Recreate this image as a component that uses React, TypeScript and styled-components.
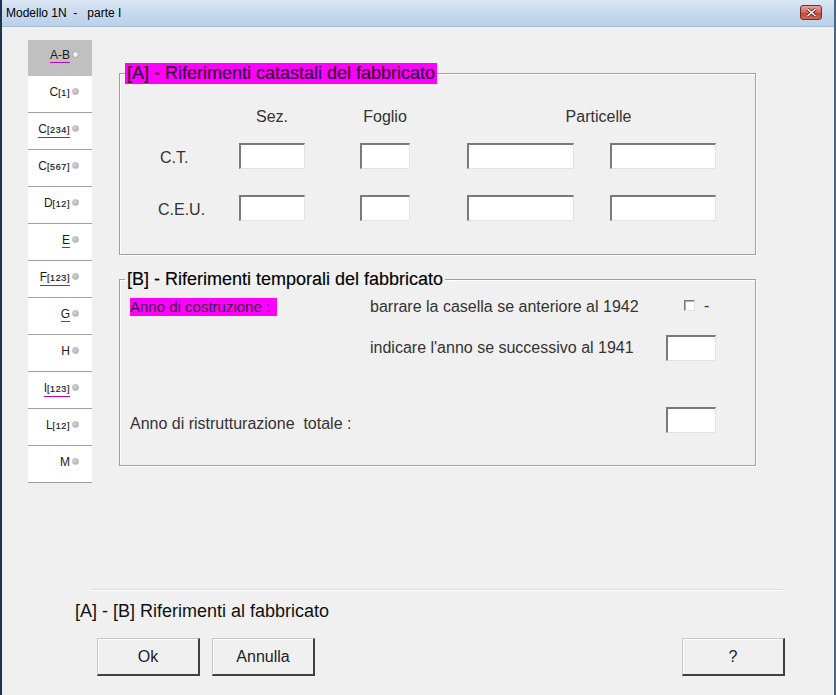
import React from 'react';
import styled, { createGlobalStyle } from 'styled-components';

const GlobalStyle = createGlobalStyle`
  html, body {
    margin: 0;
    padding: 0;
    background: #f0f0f0;
  }
  body {
    font-family: 'Liberation Sans', Arial, sans-serif;
    color: #000;
  }
`;

const Window = styled.div`
  width: 836px;
  height: 695px;
  box-sizing: border-box;
  display: flex;
  flex-direction: column;
  border-left: 2px solid #1d3450;
  border-right: 2px solid #4d6680;
  background: #f0f0f0;
  overflow: hidden;
`;

const TitleBar = styled.div`
  height: 26px;
  flex: none;
  display: flex;
  align-items: center;
  justify-content: space-between;
  padding: 0 12px 0 4px;
  background: linear-gradient(to bottom, #dbe7f4 0%, #c9dbee 45%, #b9d1ea 100%);
  border-bottom: 1px solid #a9bfd6;
`;

const Title = styled.span`
  font-family: 'Liberation Sans', Arial, sans-serif;
  font-size: 12px;
  color: #000;
  white-space: pre;
`;

const CloseButton = styled.div`
  width: 22px;
  height: 15px;
  margin-top: -2px;
  box-sizing: border-box;
  border: 1px solid #6d2e2a;
  border-radius: 3px;
  background: linear-gradient(to bottom, #e6a59a 0%, #d0675a 50%, #c04434 51%, #cf6a52 100%);
  display: flex;
  align-items: center;
  justify-content: center;
`;

const Client = styled.div`
  flex: 1;
  display: flex;
  flex-direction: column;
  background: #f0f0f0;
`;

const Body = styled.div`
  flex: 1;
  display: flex;
  align-items: flex-start;
`;

const TabColumn = styled.div`
  width: 64px;
  margin: 13px 0 0 26px;
  display: flex;
  flex-direction: column;
  background: #fff;
`;

const Tab = styled.div<{ $active?: boolean }>`
  height: ${(p) => (p.$active ? 36 : 37)}px;
  box-sizing: border-box;
  display: flex;
  align-items: flex-start;
  justify-content: flex-end;
  padding: ${(p) => (p.$active ? 8 : 9)}px 13px 0 0;
  background: ${(p) => (p.$active ? '#c0c0c0' : '#fff')};
  border-bottom: 1px solid ${(p) => (p.$active ? '#c0c0c0' : '#a0a0a0')};
  font-size: 12px;
  line-height: 14px;
  color: #1a1a1a;
`;

const TabLabel = styled.span<{ $mark?: boolean }>`
  display: inline-flex;
  align-items: baseline;
  border-bottom: 1px solid ${(p) => (p.$mark ? '#c000c0' : 'transparent')};
`;

const Sub = styled.span`
  font-size: 9px;
  letter-spacing: 0.6px;
  -webkit-text-stroke: 0.2px #1a1a1a;
`;

const Dot = styled.span<{ $hollow?: boolean }>`
  width: 7px;
  height: 7px;
  margin: 3px 0 0 2px;
  border-radius: 50%;
  box-sizing: border-box;
  background: ${(p) =>
    p.$hollow ? '#f4f4f4' : 'radial-gradient(circle at 35% 35%, #d8d8d8, #a8a8a8)'};
  border: 1px solid ${(p) => (p.$hollow ? '#a0a0a0' : '#b4b4b4')};
`;

const Main = styled.div`
  margin: 36px 0 0 27px;
  width: 637px;
  display: flex;
  flex-direction: column;
  gap: 15px;
`;

const Group = styled.fieldset<{ $pb: number }>`
  margin: 0;
  padding: 0 0 ${(p) => p.$pb}px 5px;
  border: 1px solid #a0a0a0;
  box-shadow: inset 1px 1px 0 #fff, 1px 1px 0 #fff;
  min-width: 0;
`;

const Legend = styled.legend<{ $hi?: boolean }>`
  padding: 0 2px;
  font-size: 18px;
  line-height: ${(p) => (p.$hi ? 21 : 19)}px;
  background: ${(p) => (p.$hi ? '#ff00ff' : 'transparent')};
  color: ${(p) => (p.$hi ? '#2a002a' : '#000')};
  -webkit-text-stroke: 0.15px currentColor;
  white-space: pre;
`;

const CatastoGrid = styled.div`
  margin: 24px 0 0 33px;
  display: grid;
  grid-template-columns: 81px 66px 55px 50px 57px 107px 36px 106px;
  grid-template-rows: 17px 44px 52px;
  font-size: 16px;
  color: #333;
`;

const ColHead = styled.div<{ $col: string; $shift?: number }>`
  grid-column: ${(p) => p.$col};
  grid-row: 1;
  text-align: center;
  line-height: 17px;
  padding-left: ${(p) => p.$shift || 0}px;
`;

const RowLabel = styled.div<{ $row: number }>`
  grid-column: 1;
  grid-row: ${(p) => p.$row};
  align-self: end;
  line-height: 26px;
  margin-bottom: -2px;
  margin-left: ${(p) => (p.$row === 2 ? 2 : 0)}px;
`;

const Input = styled.div<{ $col?: number; $row?: number }>`
  grid-column: ${(p) => p.$col || 'auto'};
  grid-row: ${(p) => p.$row || 'auto'};
  align-self: end;
  height: 26px;
  box-sizing: border-box;
  background: #fff;
  border-style: solid;
  border-width: 2px 1px 1px 2px;
  border-color: #7a7a7a #e3e3e3 #e3e3e3 #7a7a7a;
`;

const TemporalGrid = styled.div`
  margin: 9px 0 0 5px;
  display: grid;
  grid-template-columns: 240px 296px 50px;
  grid-template-rows: 18px 45px 72px;
  font-size: 16px;
  color: #333;
`;

const Marked = styled.span`
  grid-column: 1;
  grid-row: 1;
  display: block;
  width: 147px;
  height: 18px;
  line-height: 17px;
  background: #ff00ff;
  color: #3a1a3a;
  font-size: 15px;
  white-space: nowrap;
`;

const Text = styled.div<{ $col: number; $row: number; $lh: number; $mb?: number }>`
  grid-column: ${(p) => p.$col};
  grid-row: ${(p) => p.$row};
  align-self: end;
  line-height: ${(p) => p.$lh}px;
  margin-bottom: ${(p) => p.$mb || 0}px;
  white-space: pre;
`;

const CheckCell = styled.div`
  grid-column: 3;
  grid-row: 1;
  display: flex;
  align-items: center;
  padding-left: 18px;
  gap: 9px;
  margin-top: -3px;
`;

const CheckBox = styled.span`
  width: 11px;
  height: 11px;
  box-sizing: border-box;
  background: #fff;
  border-style: solid;
  border-width: 1px;
  border-color: #7a7a7a #e3e3e3 #e3e3e3 #7a7a7a;
  box-shadow: inset 1px 1px 0 #b0b0b0;
`;

const Footer = styled.div`
  flex: none;
  display: flex;
  flex-direction: column;
  padding-bottom: 19px;
`;

const Separator = styled.div`
  margin-left: 90px;
  width: 691px;
  height: 1px;
  background: #dcdcdc;
  border-bottom: 1px solid #fff;
`;

const Caption = styled.div`
  margin: 10px 0 0 73px;
  font-size: 18px;
  line-height: 20px;
  color: #111;
`;

const ButtonRow = styled.div`
  margin: 17px 0 0 95px;
  width: 688px;
  display: flex;
  gap: 12px;
`;

const Button = styled.button<{ $push?: boolean }>`
  width: 103px;
  height: 38px;
  margin-left: ${(p) => (p.$push ? 'auto' : '0')};
  padding: 0;
  box-sizing: border-box;
  background: #f0f0f0;
  border-style: solid;
  border-width: 1px 2px 2px 1px;
  border-color: #c8c8c8 #404040 #404040 #c8c8c8;
  box-shadow: inset 1px 1px 0 #fff;
  font-family: 'Liberation Sans', Arial, sans-serif;
  font-size: 16px;
  color: #222;
`;

const tabs: { main: string; sub?: string; mark?: boolean }[] = [
  { main: 'C', sub: '[1]' },
  { main: 'C', sub: '[234]', mark: true },
  { main: 'C', sub: '[567]' },
  { main: 'D', sub: '[12]' },
  { main: 'E', mark: true },
  { main: 'F', sub: '[123]', mark: true },
  { main: 'G', mark: true },
  { main: 'H' },
  { main: 'I ', sub: '[123]', mark: true },
  { main: 'L', sub: '[12]' },
  { main: 'M' },
];

export default function App() {
  return (
    <Window>
      <GlobalStyle />
      <TitleBar>
        <Title>{'Modello 1N  -   parte I'}</Title>
        <CloseButton>
          <svg width="11" height="9" viewBox="0 0 11 9">
            <path d="M1.5 1 L9.5 8 M9.5 1 L1.5 8" stroke="#5a1f1a" strokeWidth="3" />
            <path d="M1.5 1 L9.5 8 M9.5 1 L1.5 8" stroke="#fff" strokeWidth="1.6" />
          </svg>
        </CloseButton>
      </TitleBar>
      <Client>
        <Body>
          <TabColumn>
            <Tab $active>
              <TabLabel $mark>A-B</TabLabel>
              <Dot $hollow />
            </Tab>
            {tabs.map((t, i) => (
              <Tab key={i}>
                <TabLabel $mark={t.mark}>
                  {t.main}
                  {t.sub && <Sub>{t.sub}</Sub>}
                </TabLabel>
                <Dot />
              </Tab>
            ))}
          </TabColumn>
          <Main>
            <Group $pb={33}>
              <Legend $hi>[A] - Riferimenti catastali del fabbricato</Legend>
              <CatastoGrid>
                <ColHead $col="2">Sez.</ColHead>
                <ColHead $col="4">Foglio</ColHead>
                <ColHead $col="6 / 9" $shift={14}>Particelle</ColHead>
                <RowLabel $row={2}>C.T.</RowLabel>
                <Input $col={2} $row={2} />
                <Input $col={4} $row={2} />
                <Input $col={6} $row={2} />
                <Input $col={8} $row={2} />
                <RowLabel $row={3}>C.E.U.</RowLabel>
                <Input $col={2} $row={3} />
                <Input $col={4} $row={3} />
                <Input $col={6} $row={3} />
                <Input $col={8} $row={3} />
              </CatastoGrid>
            </Group>
            <Group $pb={32}>
              <Legend>[B] - Riferimenti temporali del fabbricato</Legend>
              <TemporalGrid>
                <Marked>Anno di costruzione :</Marked>
                <Text $col={2} $row={1} $lh={18}>barrare la casella se anteriore al 1942</Text>
                <CheckCell>
                  <CheckBox />
                  <span>-</span>
                </CheckCell>
                <Text $col={2} $row={2} $lh={26}>indicare l'anno se successivo al 1941</Text>
                <Input $col={3} $row={2} />
                <Text $col={1} $row={3} $lh={18}>{'Anno di ristrutturazione  totale :'}</Text>
                <Input $col={3} $row={3} />
              </TemporalGrid>
            </Group>
          </Main>
        </Body>
        <Footer>
          <Separator />
          <Caption>[A] - [B] Riferimenti al fabbricato</Caption>
          <ButtonRow>
            <Button>Ok</Button>
            <Button>Annulla</Button>
            <Button $push>?</Button>
          </ButtonRow>
        </Footer>
      </Client>
    </Window>
  );
}
